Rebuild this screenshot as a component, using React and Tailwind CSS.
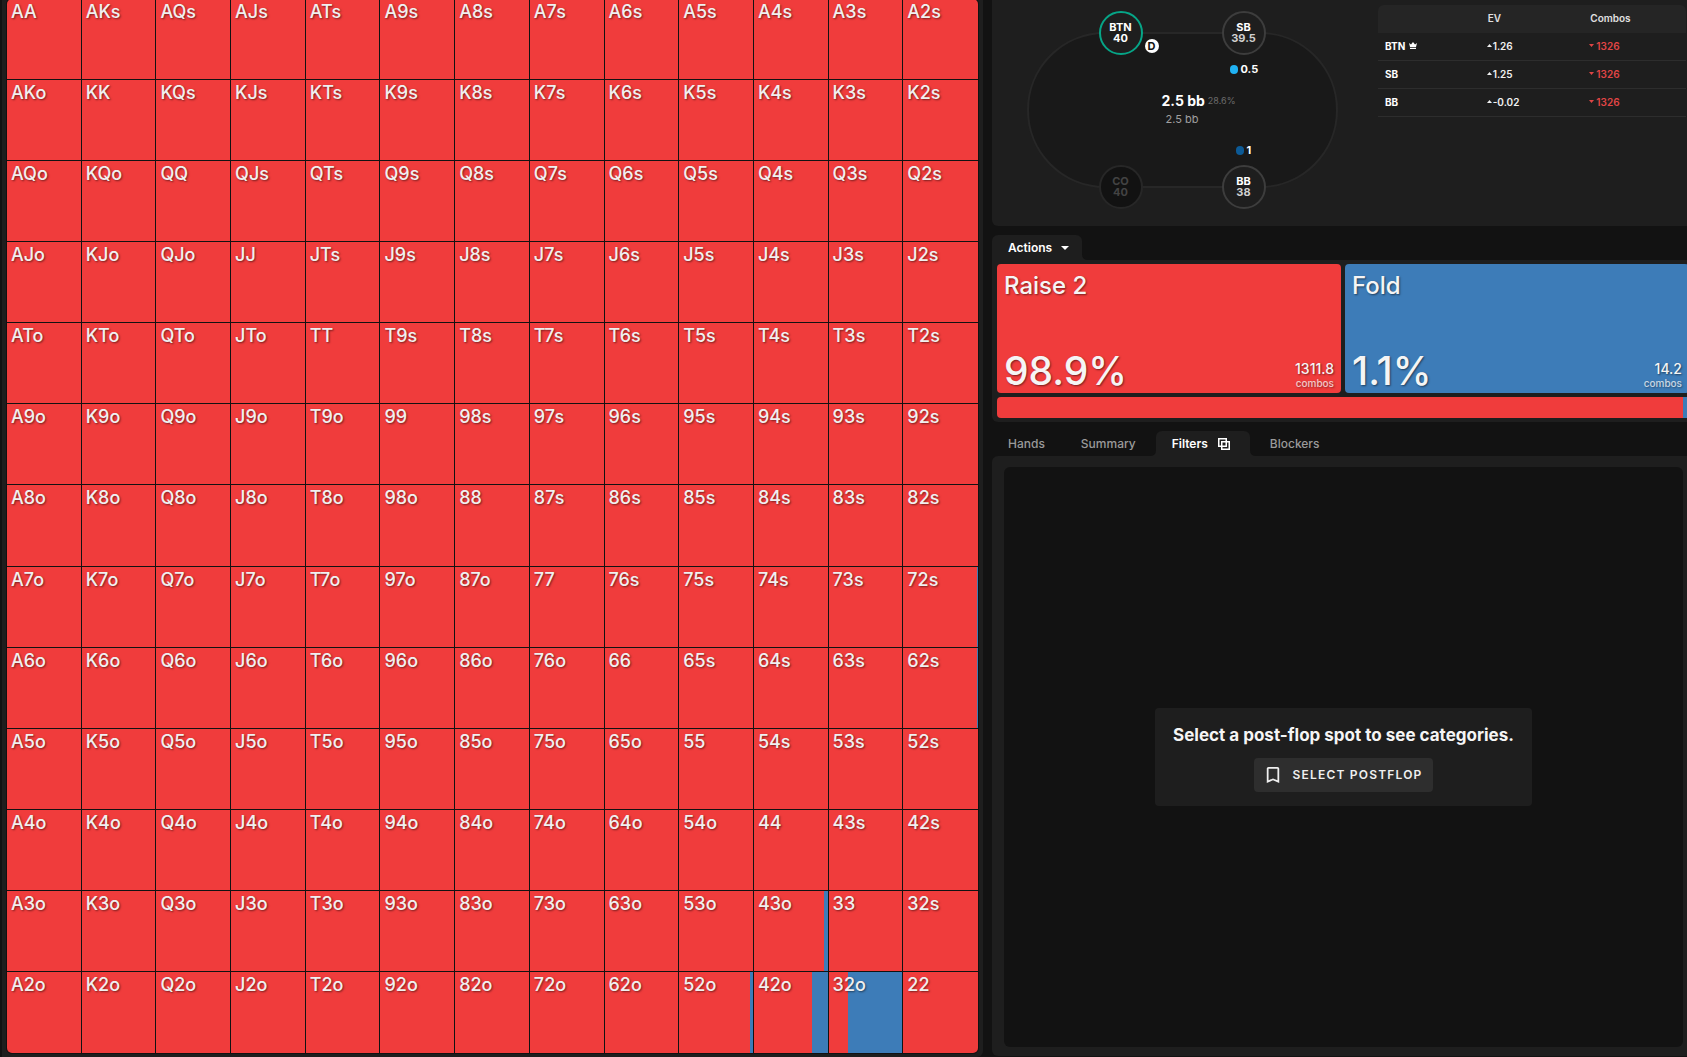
import clsx from "clsx";

const RANKS = ["A", "K", "Q", "J", "T", "9", "8", "7", "6", "5", "4", "3", "2"];

// fold frequency (%) for hands that are not a pure raise
const FOLDS = {
  "72s": 1.2,
  "62s": 1.2,
  "43o": 5.5,
  "52o": 4.5,
  "42o": 21.5,
  "32o": 74,
};

const HANDS = RANKS.flatMap((row, i) =>
  RANKS.map((col, j) => {
    if (i === j) return row + col;
    return i < j ? `${row}${col}s` : `${col}${row}o`;
  })
);

const PLAYERS = [
  { name: "BTN", ev: "1.26", combos: "1326", hero: true },
  { name: "SB", ev: "1.25", combos: "1326" },
  { name: "BB", ev: "-0.02", combos: "1326" },
];

const ACTIONS = [
  { name: "Raise 2", pct: "98.9", combos: "1311.8", color: "bg-[#f03c3c]" },
  { name: "Fold", pct: "1.1", combos: "14.2", color: "bg-[#3d7cb8]" },
];

const SHADOW = "[text-shadow:1px_1px_2px_rgba(0,0,0,0.5)]";

function HandCell({ hand }) {
  const fold = FOLDS[hand];
  return (
    <div className="relative overflow-hidden border-r border-b border-[#121212] bg-[#f03c3c] nth-[13n]:border-r-0 nth-last-[-n+13]:border-b-0">
      {fold && (
        <div
          className="absolute inset-y-0 right-0 bg-[#3d7cb8]"
          style={{ width: `${fold}%` }}
        />
      )}
      <span
        className={clsx(
          "relative block pt-px pl-1 text-lg leading-6 font-medium text-[#f0f0f0]",
          SHADOW
        )}
      >
        {hand}
      </span>
    </div>
  );
}

function RangeMatrix() {
  return (
    <section className="ml-0.5 flex min-h-0 rounded-br-md bg-[#1e1e1e] px-1 pb-[3px]">
      <div className="-mt-0.5 grid min-h-0 flex-1 grid-cols-13 grid-rows-13 overflow-hidden rounded-md border border-[#121212] bg-[#121212]">
        {HANDS.map((hand) => (
          <HandCell key={hand} hand={hand} />
        ))}
      </div>
    </section>
  );
}

function Seat({ name, stack, className, stackClass }) {
  return (
    <div
      className={clsx(
        "absolute flex size-11 flex-col items-center justify-center rounded-full border-2 text-[11px] leading-[11px] font-bold",
        className
      )}
    >
      <span>{name}</span>
      <span className={stackClass}>{stack}</span>
    </div>
  );
}

function Bet({ amount, className, chip }) {
  return (
    <div
      className={clsx(
        "absolute flex items-center gap-[3px] text-[11px] leading-3 font-bold text-white",
        className
      )}
    >
      <span className={clsx("h-[9px] w-2 rounded-full", chip)} />
      {amount}
    </div>
  );
}

function PokerTable() {
  return (
    <div className="flex justify-center pt-[11px] pr-1.5">
      <div className="relative h-46 w-[311px]">
        <div className="absolute inset-x-0 top-[21px] bottom-[7px] rounded-full border-2 border-[#272727] bg-[#191919]" />
        <Seat
          name="BTN"
          stack="40"
          className="top-0 left-[72px] border-[#06a587] bg-[#1e1e1e] text-white"
        />
        <Seat
          name="SB"
          stack="39.5"
          className="top-0 left-[195px] border-[#3d3d3d] bg-[#1e1e1e] text-white"
          stackClass="text-[#d0d0d0]"
        />
        <Seat
          name="CO"
          stack="40"
          className="top-[154px] left-[72px] border-[#272727] bg-[#121212] text-[#434343]"
        />
        <Seat
          name="BB"
          stack="38"
          className="top-[154px] left-[195px] border-[#3d3d3d] bg-[#1e1e1e] text-white"
          stackClass="text-[#d0d0d0]"
        />
        <span className="absolute top-7 left-[118px] flex size-3.5 items-center justify-center rounded-full bg-white text-[11px] leading-none font-bold text-[#121212]">
          D
        </span>
        <Bet amount="0.5" chip="bg-[#20b2f3]" className="top-[52px] left-[203px]" />
        <Bet amount="1" chip="bg-[#0c5a96]" className="top-[133px] left-[209px]" />
        <div className="absolute top-[80px] left-[135px] flex items-center gap-[3px]">
          <span className="text-sm leading-5 font-bold text-white">2.5 bb</span>
          <span className="text-[9px] leading-5 text-[#6c6c6c]">28.6%</span>
        </div>
        <span className="absolute inset-x-0 top-[100px] text-center text-[11px] leading-4 text-[#a0a0a0]">
          2.5 bb
        </span>
      </div>
    </div>
  );
}

function Crown() {
  return (
    <svg viewBox="0 0 16 14" className="h-[7px] w-2 fill-current" aria-hidden="true">
      <path d="M0 2l4 3 4-5 4 5 4-3-2 8H2zM2 11.500h12V14H2z" />
    </svg>
  );
}

function EvTable() {
  return (
    <table className="mt-[5px] mr-px w-[calc(100%-1px)] table-fixed border-separate border-spacing-0 text-left text-[10px] leading-3">
      <thead>
        <tr className="h-7 text-[#e0e0e0]">
          <th className="rounded-tl-md bg-[#252525] p-0" aria-label="Player" />
          <th className="bg-[#252525] px-[7px] pt-0 pb-0.5 font-semibold">EV</th>
          <th className="rounded-tr-md bg-[#252525] px-[7px] pt-0 pb-0.5 font-semibold">
            Combos
          </th>
        </tr>
      </thead>
      <tbody>
        {PLAYERS.map((p) => (
          <tr key={p.name} className="h-7">
            <th className="border-b border-[#2d2d2d] px-[7px] pt-0 pb-0.5 font-bold text-white">
              <span className="flex items-center gap-1">
                {p.name}
                {p.hero && <Crown />}
              </span>
            </th>
            <td className="border-b border-[#2d2d2d] px-1.5 pt-0 pb-0.5 font-semibold text-[#f0f0f0]">
              <span className="flex items-center gap-px">
                <svg viewBox="0 0 5 3" className="h-[3px] w-[5px] fill-current" aria-hidden="true">
                  <path d="M0 3L2.500 0L5 3z" />
                </svg>
                {p.ev}
              </span>
            </td>
            <td className="border-b border-[#2d2d2d] px-1.5 pt-0 pb-0.5 font-semibold text-[#e04545]">
              <span className="flex items-center gap-0.5">
                <svg viewBox="0 0 5 3" className="h-[3px] w-[5px] fill-current" aria-hidden="true">
                  <path d="M0 0L2.500 3L5 0z" />
                </svg>
                {p.combos}
              </span>
            </td>
          </tr>
        ))}
      </tbody>
    </table>
  );
}

// small inverted corner where an open tab meets its panel
function TabCorner({ side }) {
  return (
    <svg
      viewBox="0 0 6 6"
      className={clsx(
        "absolute bottom-0 size-1.5 fill-[#1e1e1e]",
        side === "left" ? "right-full -scale-x-100" : "left-full"
      )}
      aria-hidden="true"
    >
      <path d="M0 0Q0 6 6 6H0z" />
    </svg>
  );
}

function ActionCard({ action }) {
  return (
    <button
      type="button"
      className={clsx(
        "flex h-[129px] flex-col justify-between rounded px-[7px] text-left text-[#f5f5f5]",
        SHADOW,
        action.color
      )}
    >
      <span className="pt-1.5 text-2xl leading-8 font-medium">{action.name}</span>
      <span className="flex w-full items-end justify-between pb-1">
        <span className="text-[39px] leading-9 font-medium">{action.pct}%</span>
        <span className="flex flex-col text-right">
          <span className="text-sm leading-4 font-medium">{action.combos}</span>
          <span className="text-[10px] leading-3 font-medium opacity-75">combos</span>
        </span>
      </span>
    </button>
  );
}

function Actions() {
  return (
    <section className="mt-[9px]">
      <button
        type="button"
        className="relative flex h-[25px] items-center gap-[9px] rounded-t-md bg-[#1e1e1e] pr-[13px] pl-4 text-xs font-semibold text-white"
      >
        Actions
        <svg viewBox="0 0 8 4" className="h-1 w-2 fill-current" aria-hidden="true">
          <path d="M0 0h8L4 4z" />
        </svg>
        <TabCorner side="right" />
      </button>
      <div className="rounded-bl-md bg-[#1e1e1e] py-1 pl-[5px]">
        <div className="-mr-0.5 grid grid-cols-2 gap-1">
          {ACTIONS.map((a) => (
            <ActionCard key={a.name} action={a} />
          ))}
        </div>
        <div className="mt-1 -mr-1 flex h-[21px] overflow-hidden rounded">
          {ACTIONS.map((a) => (
            <div key={a.name} className={a.color} style={{ width: `${a.pct}%` }} />
          ))}
        </div>
      </div>
    </section>
  );
}

function Filters() {
  return (
    <section className="mt-[9px] flex min-h-0 flex-1 flex-col">
      <div role="tablist" className="flex h-[25px] gap-1 text-xs font-medium text-[#9a9a9a]">
        <button type="button" role="tab" className="px-4">
          Hands
        </button>
        <button type="button" role="tab" className="px-4">
          Summary
        </button>
        <button
          type="button"
          role="tab"
          aria-selected="true"
          className="relative flex items-center gap-2.5 rounded-t-md bg-[#1e1e1e] pr-5 pl-4 font-semibold text-white"
        >
          <TabCorner side="left" />
          Filters
          <svg
            viewBox="0 0 12 12"
            className="size-3 fill-none stroke-current stroke-[1.500]"
            aria-hidden="true"
          >
            <path d="M.75.75h7.500v7.500H.75zM3.750 3.750h7.500v7.500h-7.500z" />
          </svg>
          <TabCorner side="right" />
        </button>
        <button type="button" role="tab" className="px-4">
          Blockers
        </button>
      </div>
      <div className="mb-px flex min-h-0 flex-1 rounded-l-md bg-[#1e1e1e] pt-[11px] pr-1 pb-[9px] pl-3">
        <div className="flex flex-1 items-center justify-center rounded-md bg-[#121212]">
          <div className="flex flex-col items-center rounded bg-[#1e1e1e] px-[18px] pt-[15px] pb-3.5">
            <h2 className="text-[17px] leading-6 font-bold text-[#f5f5f5]">
              Select a post-flop spot to see categories.
            </h2>
            <button
              type="button"
              className="mt-[11px] flex h-[34px] items-center gap-3 rounded bg-[#2e2e2e] pr-2.5 pl-3 text-xs font-semibold tracking-widest text-[#f0f0f0] uppercase"
            >
              <svg viewBox="0 0 14 18" className="h-4 w-3.5 fill-current" aria-hidden="true">
                <path d="M12 0H2C.9 0 0 .9 0 2v16l7-3 7 3V2c0-1.100-.9-2-2-2zm0 15l-5-2.180L2 15V2h10v13z" />
              </svg>
              Select postflop
            </button>
          </div>
        </div>
      </div>
    </section>
  );
}

function App() {
  return (
    <main className="grid h-screen grid-cols-[983fr_704fr] overflow-hidden bg-[#121212] font-[Inter,sans-serif]">
      <RangeMatrix />
      <div className="flex min-h-0 min-w-0 flex-col overflow-hidden pl-[9px]">
        <section className="grid h-[226px] grid-cols-[386fr_309fr] rounded-bl-md bg-[#1e1e1e]">
          <PokerTable />
          <div>
            <EvTable />
          </div>
        </section>
        <Actions />
        <Filters />
      </div>
    </main>
  );
}

export default App;
